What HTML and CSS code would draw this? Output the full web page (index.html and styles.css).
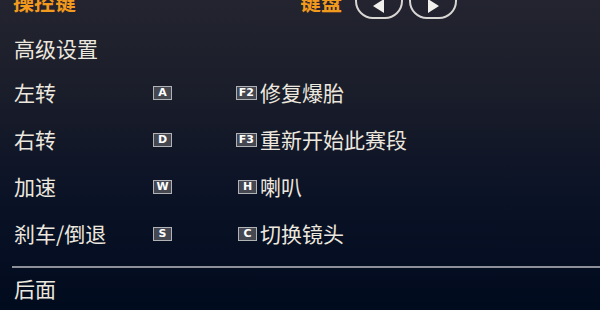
FILE: index.html
```html
<!DOCTYPE html>
<html lang="zh">
<head>
<meta charset="utf-8">
<link rel="stylesheet" href="styles.css">
</head>
<body>
<div class="screen">
  <div class="header">
    <span class="tab-title">操控键</span>
    <span class="tab-mode">键盘</span>
    <span class="nav-btn"><svg width="14" height="16" viewBox="0 0 14 16"><polygon points="12,1 12,15 1,8" fill="#f2f0ec"/></svg></span>
    <span class="nav-btn"><svg width="14" height="16" viewBox="0 0 14 16"><polygon points="2,1 2,15 13,8" fill="#f2f0ec"/></svg></span>
  </div>
  <div class="section-title">高级设置</div>
  <div class="rows">
    <div class="row">
      <span class="label">左转</span>
      <span class="key1"><span class="key">A</span></span>
      <span class="key2"><span class="key">F2</span></span>
      <span class="action">修复爆胎</span>
    </div>
    <div class="row">
      <span class="label">右转</span>
      <span class="key1"><span class="key">D</span></span>
      <span class="key2"><span class="key">F3</span></span>
      <span class="action">重新开始此赛段</span>
    </div>
    <div class="row">
      <span class="label">加速</span>
      <span class="key1"><span class="key">W</span></span>
      <span class="key2"><span class="key">H</span></span>
      <span class="action">喇叭</span>
    </div>
    <div class="row">
      <span class="label">刹车/倒退</span>
      <span class="key1"><span class="key">S</span></span>
      <span class="key2"><span class="key">C</span></span>
      <span class="action">切换镜头</span>
    </div>
  </div>
  <div class="divider"></div>
  <div class="footer">后面</div>
</div>
</body>
</html>
```
FILE: styles.css
```css
html, body {
  margin: 0;
  padding: 0;
}
body {
  width: 600px;
  height: 310px;
  overflow: hidden;
  background: linear-gradient(180deg, #23242f 0%, #1a1d2a 30%, #0a1226 65%, #010b1e 100%);
  font-family: "Noto Sans CJK SC", "Noto Sans", sans-serif;
  color: #ece7df;
}
.screen {
  padding-left: 13px;
  display: flex;
  flex-direction: column;
}
.header {
  height: 36px;
  margin-top: -17px;
  display: flex;
  align-items: center;
}
.tab-title {
  width: 287px;
  font-size: 21px;
  font-weight: 700;
  color: #f29a1d;
  line-height: 1;
}
.tab-mode {
  width: 42px;
  margin-right: 13px;
  font-size: 21px;
  font-weight: 700;
  color: #f29a1d;
  line-height: 1;
}
.nav-btn {
  box-sizing: border-box;
  width: 48px;
  height: 36px;
  margin-right: 6px;
  border: 2px solid #d8d6d2;
  border-radius: 18px;
  display: flex;
  align-items: center;
  justify-content: center;
  padding-top: 10px;
}
.nav-btn svg {
  display: block;
}
.section-title {
  margin-top: 15px;
  height: 28px;
  line-height: 28px;
  font-size: 21px;
  padding-left: 1px;
}
.rows {
  margin-top: 6px;
  display: flex;
  flex-direction: column;
}
.row {
  height: 47px;
  display: grid;
  grid-template-columns: 140px 79px 25px 1fr;
  align-items: center;
  font-size: 21px;
}
.label {
  padding-left: 1px;
  line-height: 28px;
}
.key1 {
  display: flex;
}
.key2 {
  display: flex;
  justify-content: flex-end;
}
.action {
  padding-left: 3px;
  line-height: 28px;
}
.key {
  box-sizing: border-box;
  height: 14px;
  min-width: 19px;
  padding: 0 2px;
  border: 1px solid #b0b2b6;
  background: #454851;
  color: #ffffff;
  font-family: "DejaVu Sans", sans-serif;
  font-weight: 700;
  font-size: 11px;
  line-height: 12px;
  text-align: center;
  margin-top: 2px;
}
.divider {
  margin-top: 10px;
  margin-left: -1px;
  height: 2px;
  background: #8c8f97;
}
.footer {
  margin-top: 6px;
  height: 28px;
  line-height: 28px;
  font-size: 21px;
  padding-left: 1px;
}
```
